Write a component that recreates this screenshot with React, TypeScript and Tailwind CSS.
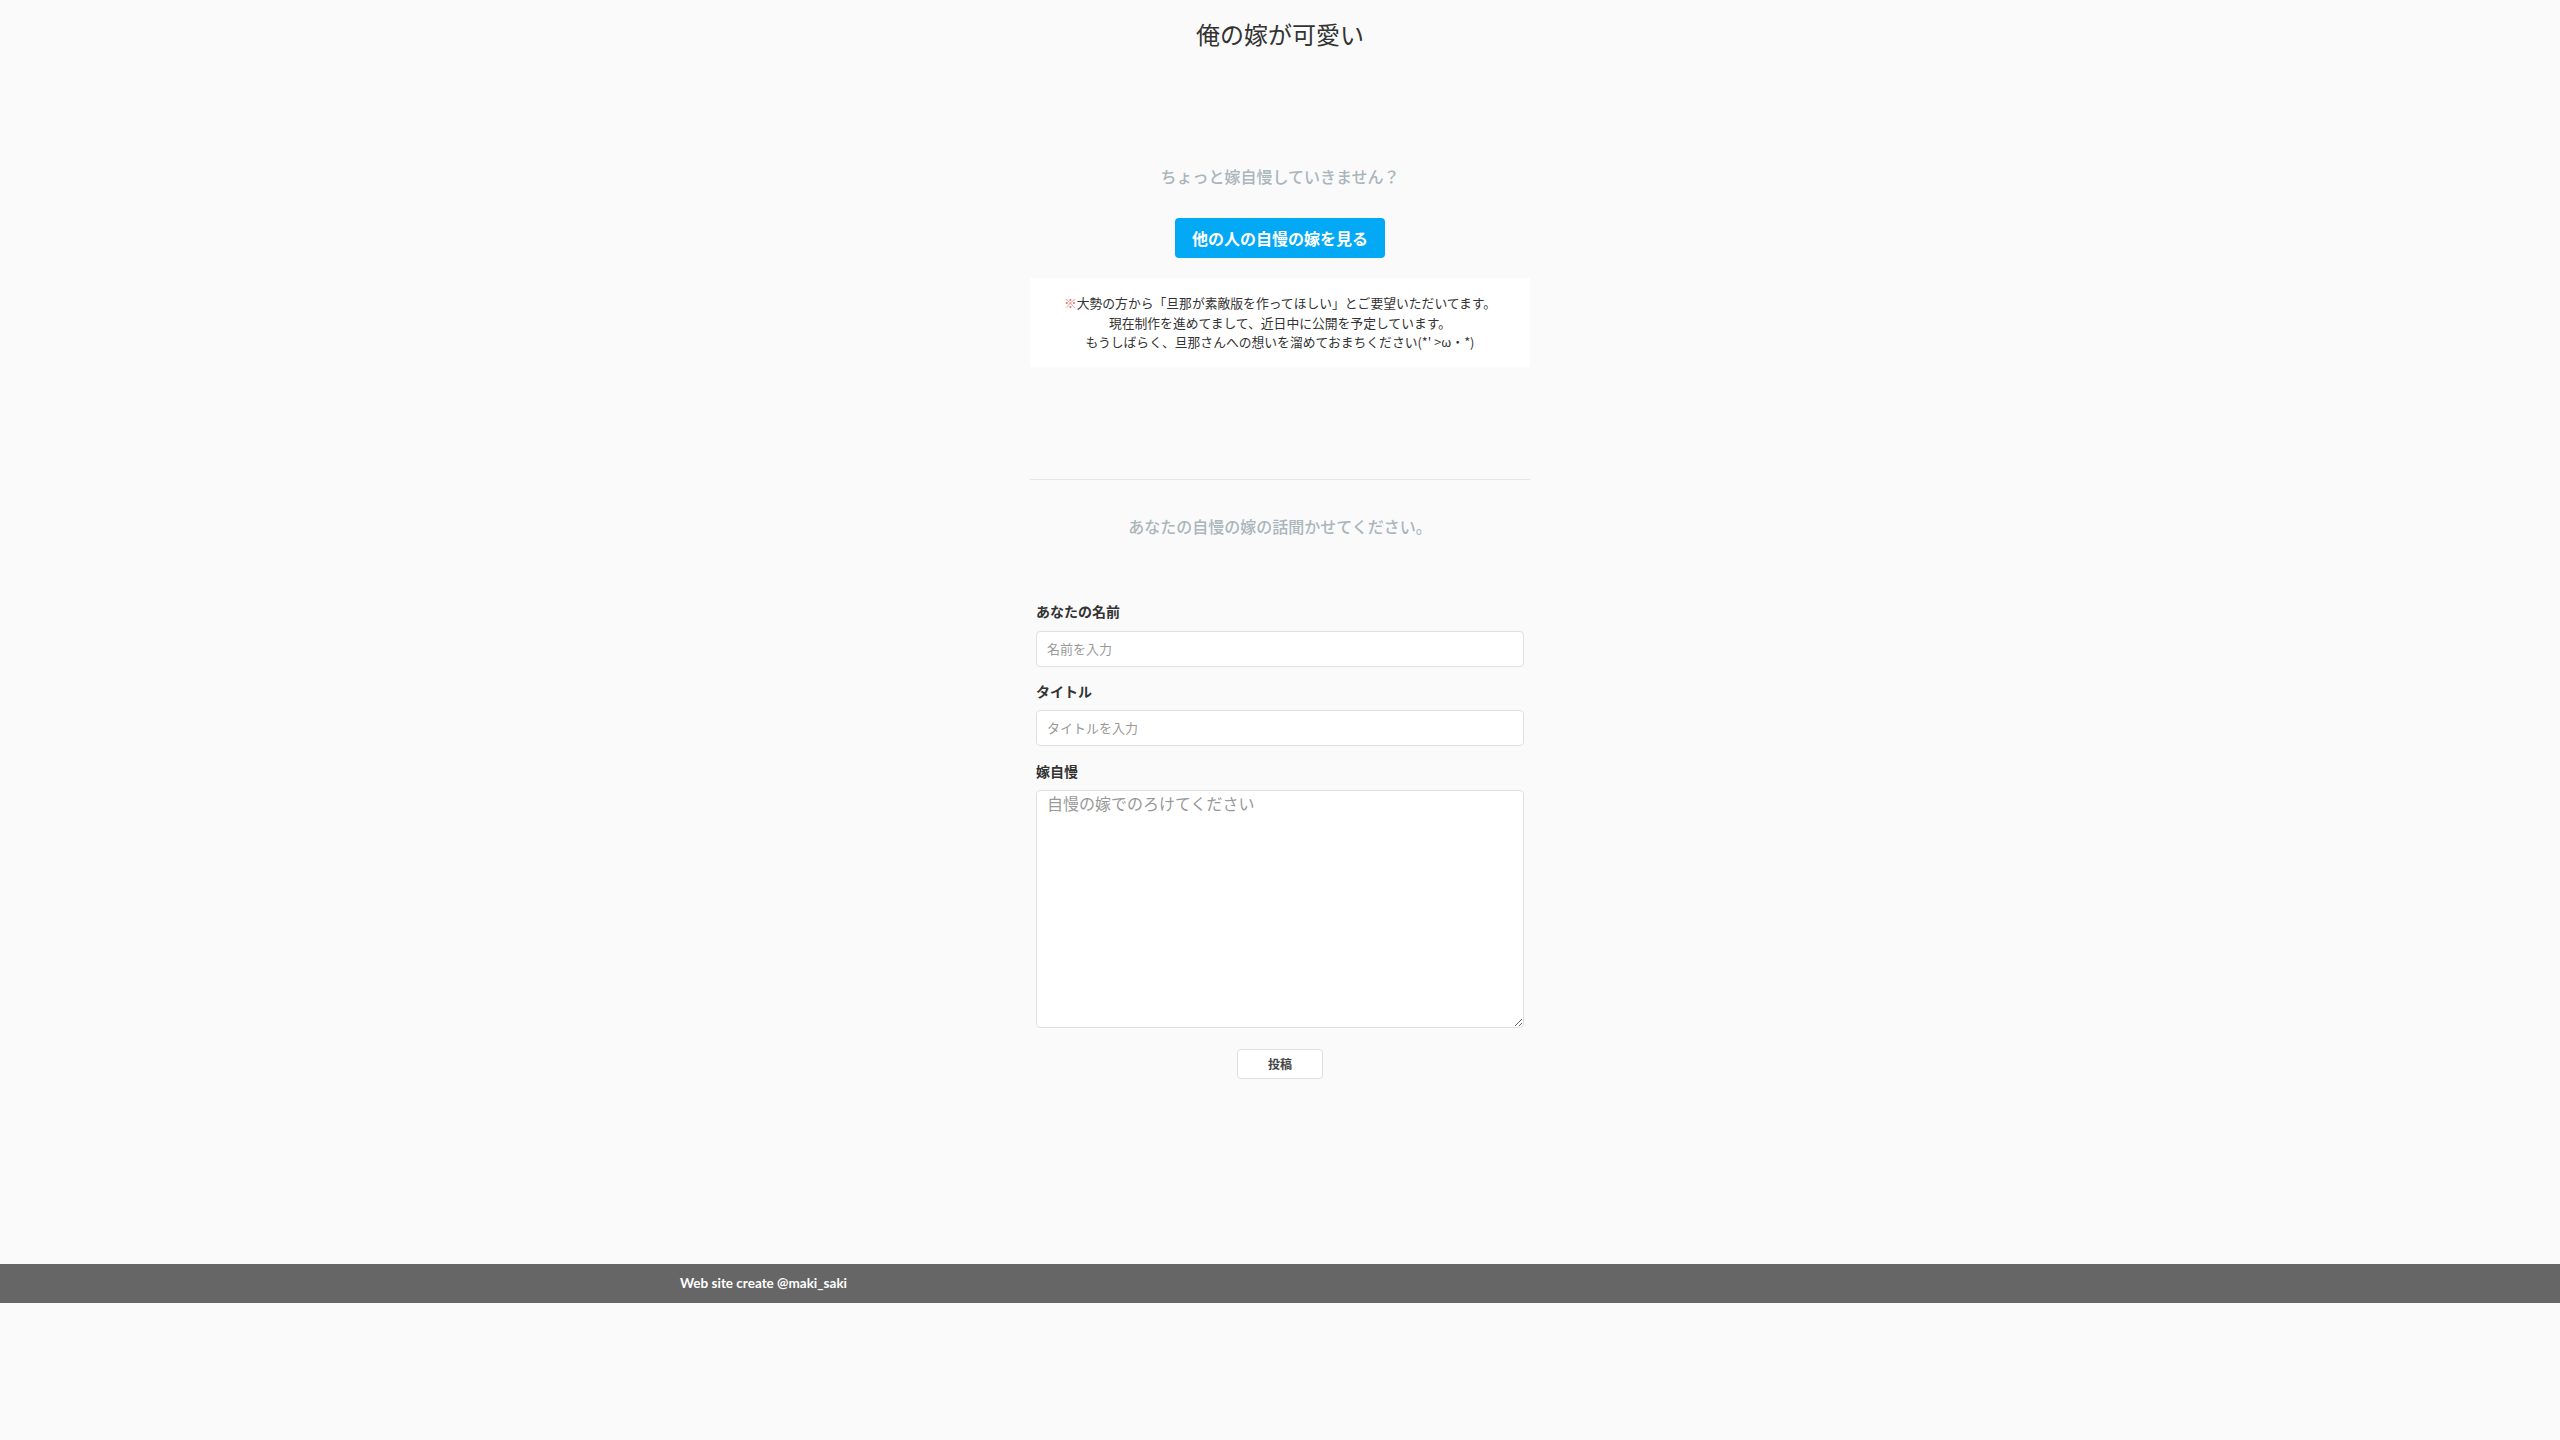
// 嫁自慢投稿ページ。トップの案内と投稿フォーム、フッターだけのシンプルな構成。

import React, { useState } from 'react';

const jp = "font-['Noto_Sans_CJK_JP',_'Noto_Sans',_sans-serif]";

const App: React.FC = () => {
  const [name, setName] = useState('');
  const [title, setTitle] = useState('');
  const [body, setBody] = useState('');

  return (
    <div className={`min-h-[1440px] bg-[#fafafa] text-[#333] ${jp}`}>
      <div className="mx-auto w-[500px] flex flex-col items-center">
        {/* ヘッダー */}
        <h1 className="mt-4 text-[24px] leading-[36px] font-normal text-[#333]">俺の嫁が可愛い</h1>

        <p className="mt-[112px] text-[16px] leading-[24px] font-medium text-[#aab5ba]">ちょっと嫁自慢していきません？</p>

        <button className="mt-[30px] h-10 px-[17px] rounded bg-[#03a9f4] text-white text-[16px] font-bold">
          他の人の自慢の嫁を見る
        </button>

        <div className="mt-5 w-full bg-white py-[15px] text-center text-[12.8px] leading-[19.5px] text-[#333]">
          <p>
            <span className="text-[#e57373]">※</span>大勢の方から「旦那が素敵版を作ってほしい」とご要望いただいてます。
          </p>
          <p>現在制作を進めてまして、近日中に公開を予定しています。</p>
          <p>もうしばらく、旦那さんへの想いを溜めておまちください(*' &gt;ω・*)</p>
        </div>

        <hr className="mt-[112px] w-full border-t border-[#e5e5e5]" />

        <p className="mt-[34px] text-[16px] leading-[24px] font-medium text-[#aab5ba]">あなたの自慢の嫁の話聞かせてください。</p>

        {/* 投稿フォーム */}
        <form className="mt-[63px] w-full px-[6px] flex flex-col" onSubmit={(e) => e.preventDefault()}>
          <label className="text-[14px] leading-5 font-bold">あなたの名前</label>
          <input
            value={name}
            onChange={(e) => setName(e.target.value)}
            placeholder="名前を入力"
            className="mt-[10px] h-9 w-full rounded border border-[#e0e0e0] bg-white px-[10px] text-[13px] outline-none placeholder:text-[#999]"
          />

          <label className="mt-[14px] text-[14px] leading-5 font-bold">タイトル</label>
          <input
            value={title}
            onChange={(e) => setTitle(e.target.value)}
            placeholder="タイトルを入力"
            className="mt-[9px] h-9 w-full rounded border border-[#e0e0e0] bg-white px-[10px] text-[13px] outline-none placeholder:text-[#999]"
          />

          <label className="mt-[15px] text-[14px] leading-5 font-bold">嫁自慢</label>
          <textarea
            value={body}
            onChange={(e) => setBody(e.target.value)}
            placeholder="自慢の嫁でのろけてください"
            className="mt-[9px] h-[238px] w-full rounded border border-[#e0e0e0] bg-white px-[10px] py-0 text-[16px] leading-[24px] outline-none placeholder:text-[#999]"
          />

          <button
            type="submit"
            className="mt-[21px] self-center h-[30px] w-[86px] rounded border border-[#e0e0e0] bg-white text-[12px] font-bold text-[#444]"
          >
            投稿
          </button>
        </form>
      </div>

      {/* フッター */}
      <footer className="mt-[185px] h-[39px] bg-[#666]">
        <div className="mx-auto w-[1200px] h-full flex items-center">
          <p className="font-['Lato',_sans-serif] text-[13.5px] font-bold text-white">Web site create @maki_saki</p>
        </div>
      </footer>
    </div>
  );
};

export default App;
